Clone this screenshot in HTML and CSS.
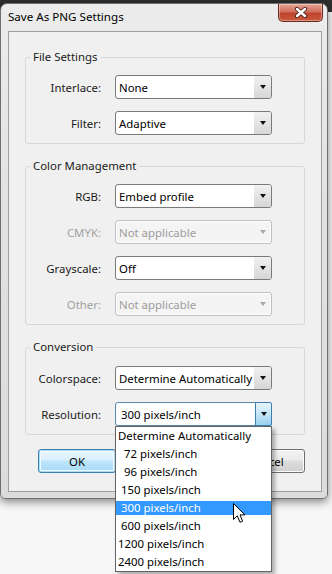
FILE: index.html
```html
<!DOCTYPE html>
<html lang="en">
<head>
    <meta charset="UTF-8">
    <meta name="viewport" content="width=device-width, initial-scale=1.0">
    <title>Save As PNG Settings</title>
    <link rel="stylesheet" href="styles.css">
</head>
<body>
    <div class="window">
        <div class="titlebar">
            <span class="title">Save As PNG Settings</span>
            <button class="close-btn" aria-label="Close">
                <svg width="14" height="11" viewBox="0 0 14 11">
                    <path d="M3 2 L11 9 M11 2 L3 9" stroke="#4a2420" stroke-width="4.2" stroke-linecap="round"/>
                    <path d="M3 2 L11 9 M11 2 L3 9" stroke="#fff" stroke-width="2.4" stroke-linecap="round"/>
                </svg>
            </button>
        </div>

        <div class="client">
            <fieldset class="group">
                <legend>File Settings</legend>
                <div class="fields">
                    <label>Interlace:</label>
                    <div class="select"><span class="value">None</span><span class="arrow"></span></div>

                    <label>Filter:</label>
                    <div class="select"><span class="value">Adaptive</span><span class="arrow"></span></div>
                </div>
            </fieldset>

            <fieldset class="group">
                <legend>Color Management</legend>
                <div class="fields">
                    <label>RGB:</label>
                    <div class="select"><span class="value">Embed profile</span><span class="arrow"></span></div>

                    <label class="disabled">CMYK:</label>
                    <div class="select disabled"><span class="value">Not applicable</span><span class="arrow"></span></div>

                    <label>Grayscale:</label>
                    <div class="select"><span class="value">Off</span><span class="arrow"></span></div>

                    <label class="disabled">Other:</label>
                    <div class="select disabled"><span class="value">Not applicable</span><span class="arrow"></span></div>
                </div>
            </fieldset>

            <fieldset class="group">
                <legend>Conversion</legend>
                <div class="fields">
                    <label>Colorspace:</label>
                    <div class="select"><span class="value">Determine Automatically</span><span class="arrow"></span></div>

                    <label>Resolution:</label>
                    <div class="select open">
                        <span class="value">300 pixels/inch</span><span class="arrow"></span>
                        <ul class="dropdown">
                            <li class="option">Determine Automatically</li>
                            <li class="option indent-2">72 pixels/inch</li>
                            <li class="option indent-2">96 pixels/inch</li>
                            <li class="option indent-1">150 pixels/inch</li>
                            <li class="option indent-1 selected">300 pixels/inch</li>
                            <li class="option indent-1">600 pixels/inch</li>
                            <li class="option">1200 pixels/inch</li>
                            <li class="option">2400 pixels/inch</li>
                        </ul>
                        <svg class="cursor" width="13" height="21" viewBox="0 0 13 21">
                            <path d="M0.5 0.5 L0.5 16.5 L4.3 12.8 L7 19.3 L9.6 18.2 L7 11.9 L12 11.9 Z" fill="#fff" stroke="#000" stroke-width="1"/>
                        </svg>
                    </div>
                </div>
            </fieldset>

            <div class="buttons">
                <button class="btn default">OK</button>
                <button class="btn">Cancel</button>
            </div>
        </div>
    </div>
</body>
</html>
```

FILE: styles.css
```css
* {
    margin: 0;
    padding: 0;
    box-sizing: border-box;
}

body {
    width: 332px;
    height: 574px;
    overflow: hidden;
    padding-top: 3px;
    background: linear-gradient(#2e2e2e 0, #2e2e2e 12px, #f6f6f6 12px);
    font-family: "Noto Sans", "Open Sans", sans-serif;
    font-size: 11.4px;
    color: #1a1a1a;
}

.window {
    width: 328px;
    height: 496px;
    display: flex;
    flex-direction: column;
    padding: 0 5px 6px 7px;
    border: 1px solid #6f6f6f;
    border-radius: 7px 7px 5px 5px;
    background: linear-gradient(#ececec, #e2e2e2 40%, #dcdcdc);
    box-shadow: 0 3px 9px rgba(0, 0, 0, 0.45);
}

/* title bar */

.titlebar {
    height: 27px;
    display: flex;
    justify-content: space-between;
    align-items: flex-start;
}

.title {
    margin-top: 5px;
    line-height: 16px;
    font-size: 11.6px;
    color: #000;
}

.close-btn {
    width: 45px;
    height: 18px;
    margin-right: -1px;
    display: flex;
    justify-content: center;
    align-items: center;
    border: 1px solid #6b2a22;
    border-top: none;
    border-radius: 0 0 5px 5px;
    background: linear-gradient(#e8a493, #d0705e 45%, #c0432f 55%, #c95a3d);
    box-shadow: inset 0 0 0 1px rgba(255, 255, 255, 0.35);
}

/* client area */

.client {
    flex: 1;
    padding: 17px 16px 0 16px;
    border: 1px solid #9a9fa4;
    background-color: #f0f0f0;
}

.group {
    padding: 10px 0 8px 0;
    margin-bottom: 14px;
    border: 1px solid #d3d8dc;
    border-radius: 3px;
}

.group legend {
    margin-left: 4px;
    padding: 0 3px;
    line-height: 16px;
}

.group:last-of-type legend {
    margin-bottom: 1px;
}

.fields {
    display: grid;
    grid-template-columns: 75px 157px;
    column-gap: 14px;
    row-gap: 12px;
    align-items: center;
}

.fields label {
    text-align: right;
}

.fields label.disabled {
    color: #a2a2a2;
}

/* combo boxes */

.select {
    position: relative;
    height: 24px;
    display: flex;
    align-items: center;
    border: 1px solid #7a7a7a;
    border-radius: 3px;
    background-color: #fff;
    box-shadow: inset 0 0 0 1px #fdfdfd;
}

.select .value {
    flex: 1;
    padding-left: 3px;
    white-space: nowrap;
    overflow: hidden;
    color: #000;
}

.select .arrow {
    width: 17px;
    height: 22px;
    display: flex;
    justify-content: center;
    align-items: center;
    border-radius: 0 2px 2px 0;
    background: linear-gradient(#f1f1f1, #e4e4e4 50%, #d6d6d6);
}

.select .arrow::before {
    content: "";
    border-left: 3.5px solid transparent;
    border-right: 3.5px solid transparent;
    border-top: 4px solid #111;
}

.select.disabled {
    border-color: #bcc0c3;
    background-color: #f4f4f4;
}

.select.disabled .value {
    color: #9c9c9c;
}

.select.disabled .arrow {
    background: none;
}

.select.disabled .arrow::before {
    border-top-color: #a9a9a9;
}

.select.open {
    border-color: #5a87aa;
}

.select.open .value {
    padding-left: 5px;
}

.select.open .arrow {
    height: 24px;
    margin-right: -1px;
    border: 1px solid #3c7fb1;
    background: linear-gradient(#e5f4fc, #c4e5f7 50%, #98d1ef);
}

/* open list */

.dropdown {
    position: absolute;
    top: 23px;
    left: -1px;
    width: 157px;
    z-index: 2;
    display: flex;
    flex-direction: column;
    gap: 4px;
    list-style: none;
    padding: 2px 0;
    border: 1px solid #646464;
    background-color: #fff;
    box-shadow: 3px 3px 4px rgba(0, 0, 0, 0.3);
}

.option {
    height: 14px;
    padding-left: 2px;
    line-height: 14px;
    white-space: nowrap;
    color: #000;
}

.option.indent-1 {
    padding-left: 5px;
}

.option.indent-2 {
    padding-left: 8px;
}

.option.selected {
    background-color: #3399ff;
    color: #fff;
}

.cursor {
    position: absolute;
    left: 117px;
    top: 100px;
    z-index: 3;
}

/* buttons */

.buttons {
    display: flex;
    justify-content: space-between;
    padding-left: 13px;
    margin-top: 1px;
}

.btn {
    width: 78px;
    height: 24px;
    font-family: inherit;
    font-size: 11.4px;
    color: #000;
    border: 1px solid #707070;
    border-radius: 3px;
    background: linear-gradient(#f2f2f2, #ebebeb 45%, #dddddd 50%, #cfcfcf);
    box-shadow: inset 0 0 0 1px #fcfcfc;
}

.btn.default {
    border-color: #3c7fb1;
    background: linear-gradient(#eaf6fd, #d9f0fc 45%, #bee6fd 50%, #a7d9f5);
    box-shadow: inset 0 0 0 1px #a9dcf6, inset 0 0 0 2px #f4fbfe;
}
```
